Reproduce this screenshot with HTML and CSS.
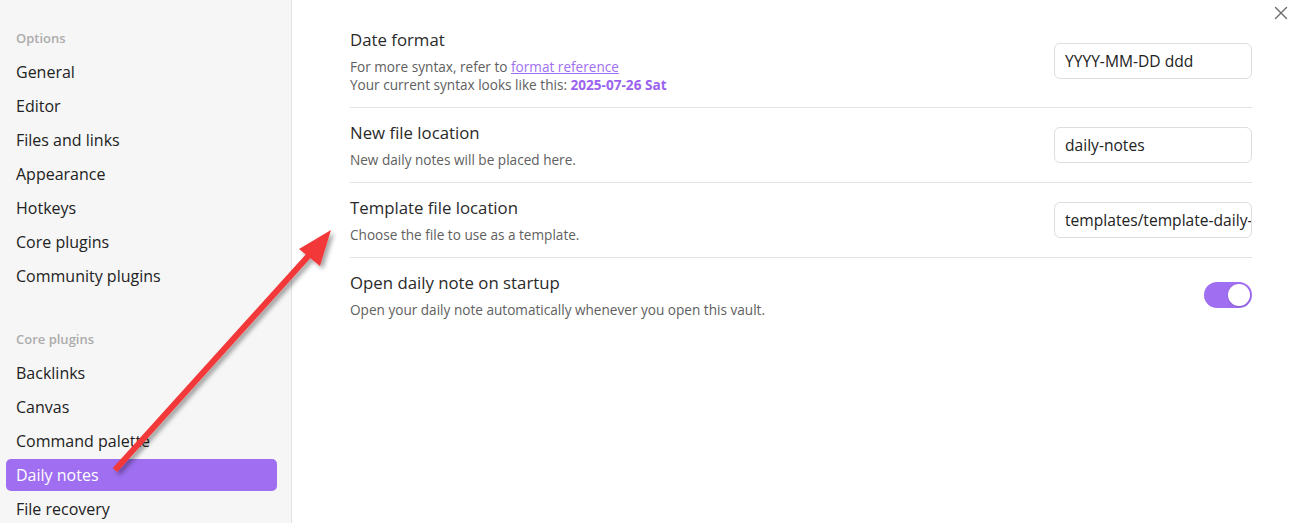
FILE: index.html
```html
<!DOCTYPE html>
<html lang="en">
<head>
<meta charset="utf-8">
<title>Settings – Daily notes</title>
<link rel="stylesheet" href="styles.css">
</head>
<body>
<div class="modal">
  <nav class="sidebar">
    <div class="nav-section">
      <div class="nav-header">Options</div>
      <div class="nav-item">General</div>
      <div class="nav-item">Editor</div>
      <div class="nav-item">Files and links</div>
      <div class="nav-item">Appearance</div>
      <div class="nav-item">Hotkeys</div>
      <div class="nav-item">Core plugins</div>
      <div class="nav-item">Community plugins</div>
    </div>
    <div class="nav-section">
      <div class="nav-header">Core plugins</div>
      <div class="nav-item">Backlinks</div>
      <div class="nav-item">Canvas</div>
      <div class="nav-item">Command palette</div>
      <div class="nav-item is-active">Daily notes</div>
      <div class="nav-item">File recovery</div>
    </div>
  </nav>
  <main class="content">
    <div class="setting">
      <div class="setting-info">
        <div class="setting-name">Date format</div>
        <div class="setting-desc">For more syntax, refer to <a class="link" href="#">format reference</a><br>Your current syntax looks like this: <b class="accent">2025-07-26 Sat</b></div>
      </div>
      <div class="text-input">YYYY-MM-DD ddd</div>
    </div>
    <div class="setting">
      <div class="setting-info">
        <div class="setting-name">New file location</div>
        <div class="setting-desc">New daily notes will be placed here.</div>
      </div>
      <div class="text-input">daily-notes</div>
    </div>
    <div class="setting">
      <div class="setting-info">
        <div class="setting-name">Template file location</div>
        <div class="setting-desc">Choose the file to use as a template.</div>
      </div>
      <div class="text-input">templates/template-daily-</div>
    </div>
    <div class="setting no-border">
      <div class="setting-info">
        <div class="setting-name">Open daily note on startup</div>
        <div class="setting-desc">Open your daily note automatically whenever you open this vault.</div>
      </div>
      <div class="toggle"><span class="knob"></span></div>
    </div>
  </main>
  <button class="close" aria-label="Close">
    <svg width="14" height="14" viewBox="0 0 14 14"><path d="M1.5 1.5 L12.5 12.5 M12.5 1.5 L1.5 12.5" stroke="#6b6b6b" stroke-width="1.4" fill="none" stroke-linecap="round"/></svg>
  </button>
  <svg class="arrow" width="1307" height="523" viewBox="0 0 1307 523">
    <defs>
      <filter id="sh" x="-20%" y="-20%" width="140%" height="140%">
        <feDropShadow dx="3" dy="3" stdDeviation="2" flood-color="#000" flood-opacity="0.35"/>
      </filter>
    </defs>
    <g filter="url(#sh)">
      <line x1="115" y1="470" x2="312" y2="252" stroke="#f23838" stroke-width="6"/>
      <polygon points="331,230 299,249 320,266" fill="#f23838"/>
    </g>
  </svg>
</div>
</body>
</html>
```
FILE: styles.css
```css
* { box-sizing: border-box; }
html, body {
  margin: 0;
  height: 100%;
  overflow: hidden;
  background: #ffffff;
}
body {
  font-family: "Open Sans", "Noto Sans", "Liberation Sans", sans-serif;
  color: #222222;
}
.modal {
  position: relative;
  display: flex;
  height: 523px;
}
.sidebar {
  width: 292px;
  flex: none;
  background: #f6f6f6;
  border-right: 1px solid #e2e2e2;
  padding: 22px 14px 0 6px;
  display: flex;
  flex-direction: column;
  gap: 31px;
  overflow: hidden;
}
.nav-section {
  display: flex;
  flex-direction: column;
  gap: 2px;
}
.nav-header {
  height: 32px;
  line-height: 32px;
  padding: 0 10px;
  font-size: 13px;
  font-weight: 600;
  color: #acacac;
}
.nav-item {
  height: 32px;
  line-height: 32px;
  padding: 0 10px;
  font-size: 16px;
  color: #222222;
  border-radius: 5px;
  white-space: nowrap;
}
.nav-item.is-active {
  background: #9f6ef1;
  color: #ffffff;
}
.content {
  flex: 1;
  padding: 15px 55px 0 58px;
}
.setting {
  display: flex;
  align-items: center;
  gap: 20px;
  padding: 13px 0 13px;
  border-bottom: 1px solid #e3e3e3;
}
.setting.no-border { border-bottom: none; }
.setting-info { flex: 1; }
.setting-name {
  font-size: 16.8px;
  line-height: 24px;
  color: #2a2a2a;
}
.setting-desc {
  margin-top: 6px;
  font-size: 13.6px;
  line-height: 18px;
  color: #606060;
}
.link {
  color: #a070f0;
  text-decoration: underline;
}
.accent {
  color: #9a62ef;
  font-weight: 700;
}
.text-input {
  width: 198px;
  height: 36px;
  flex: none;
  border: 1px solid #dedede;
  border-radius: 6px;
  padding: 0 4px 0 10px;
  font-size: 15.6px;
  line-height: 34px;
  color: #222222;
  white-space: nowrap;
  overflow: hidden;
  background: #ffffff;
}
.toggle {
  width: 48px;
  height: 26px;
  flex: none;
  border-radius: 13px;
  background: #9f6ef1;
  display: flex;
  align-items: center;
  justify-content: flex-end;
  padding: 0 2px;
}
.knob {
  width: 22px;
  height: 22px;
  border-radius: 50%;
  background: #ffffff;
  box-shadow: 0 1px 2px rgba(0,0,0,0.15);
}
.close {
  position: absolute;
  top: 1px;
  right: 14px;
  width: 24px;
  height: 24px;
  border: none;
  background: transparent;
  padding: 0;
  display: flex;
  align-items: center;
  justify-content: center;
}
.arrow {
  position: absolute;
  left: 0;
  top: 0;
  pointer-events: none;
}
```
